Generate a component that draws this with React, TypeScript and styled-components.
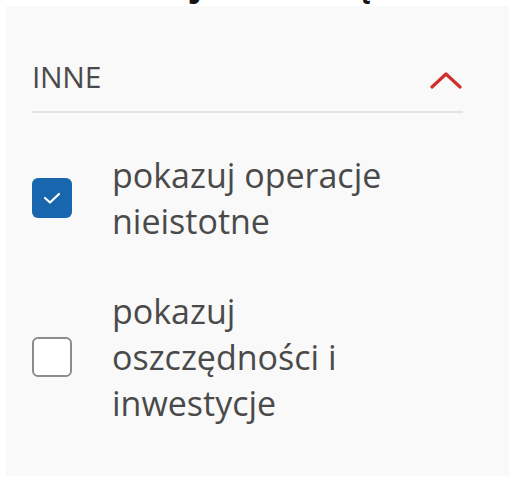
import React from 'react';
import styled, { createGlobalStyle } from 'styled-components';

const GlobalStyle = createGlobalStyle`
  body {
    margin: 0;
    background: #ffffff;
    font-family: 'Open Sans', 'Liberation Sans', sans-serif;
    overflow: hidden;
  }
`;

type Option = {
  label: string;
  checked: boolean;
};

const options: Option[] = [
  { label: 'pokazuj operacje nieistotne', checked: true },
  { label: 'pokazuj oszczędności i inwestycje', checked: false },
];

const ChevronUp: React.FC = () => (
  <ChevronSvg viewBox="0 0 32 18" width={32} height={18}>
    <polyline points="2,16 16,3 30,16" fill="none" stroke="#d0302b" strokeWidth="3.2" strokeLinecap="round" strokeLinejoin="round" />
  </ChevronSvg>
);

const App: React.FC = () => {
  return (
    <>
      <GlobalStyle />
      <PageTitle>Zadbaj teraz o ręce</PageTitle>
      <Panel>
        <Header>
          <HeaderLabel>INNE</HeaderLabel>
          <ChevronUp />
        </Header>
        <OptionList>
          {options.map((option) => (
            <OptionRow key={option.label}>
              <Box $checked={option.checked}>
                {option.checked && (
                  <svg viewBox="0 0 18 12" width={18} height={12}>
                    <polyline points="2,6 7,10.5 16,2" fill="none" stroke="#ffffff" strokeWidth="2.2" strokeLinecap="round" strokeLinejoin="round" />
                  </svg>
                )}
              </Box>
              <OptionLabel>{option.label}</OptionLabel>
            </OptionRow>
          ))}
        </OptionList>
      </Panel>
    </>
  );
};

const PageTitle = styled.h1`
  margin: -37px 0 3px 0;
  padding-left: 88px;
  height: 40px;
  font-size: 34px;
  line-height: 40px;
  font-weight: 700;
  color: #151515;
  white-space: nowrap;
`;

const Panel = styled.section`
  margin: 0 5px 0 6px;
  padding: 51px 46px 50px 26px;
  background: #f9f9f9;
`;

const Header = styled.div`
  display: flex;
  align-items: center;
  justify-content: space-between;
  padding-bottom: 14px;
  border-bottom: 2px solid #e3e3e3;
`;

const HeaderLabel = styled.span`
  font-size: 30px;
  line-height: 40px;
  color: #4a4a4a;
  letter-spacing: -0.3px;
`;

const ChevronSvg = styled.svg`
  margin-top: 6px;
  margin-right: 1px;
`;

const OptionList = styled.div`
  display: flex;
  flex-direction: column;
  gap: 44px;
  padding-top: 39px;
`;

const OptionRow = styled.label`
  display: flex;
  align-items: center;
  gap: 40px;
`;

const Box = styled.span<{ $checked: boolean }>`
  flex-shrink: 0;
  box-sizing: border-box;
  width: 40px;
  height: 40px;
  border-radius: 6px;
  display: flex;
  align-items: center;
  justify-content: center;
  background: ${({ $checked }) => ($checked ? '#1766ae' : '#ffffff')};
  border: ${({ $checked }) => ($checked ? 'none' : '2px solid #8c8c8c')};
`;

const OptionLabel = styled.span`
  max-width: 310px;
  font-size: 34px;
  line-height: 46px;
  color: #4a4a4a;
`;

export default App;
